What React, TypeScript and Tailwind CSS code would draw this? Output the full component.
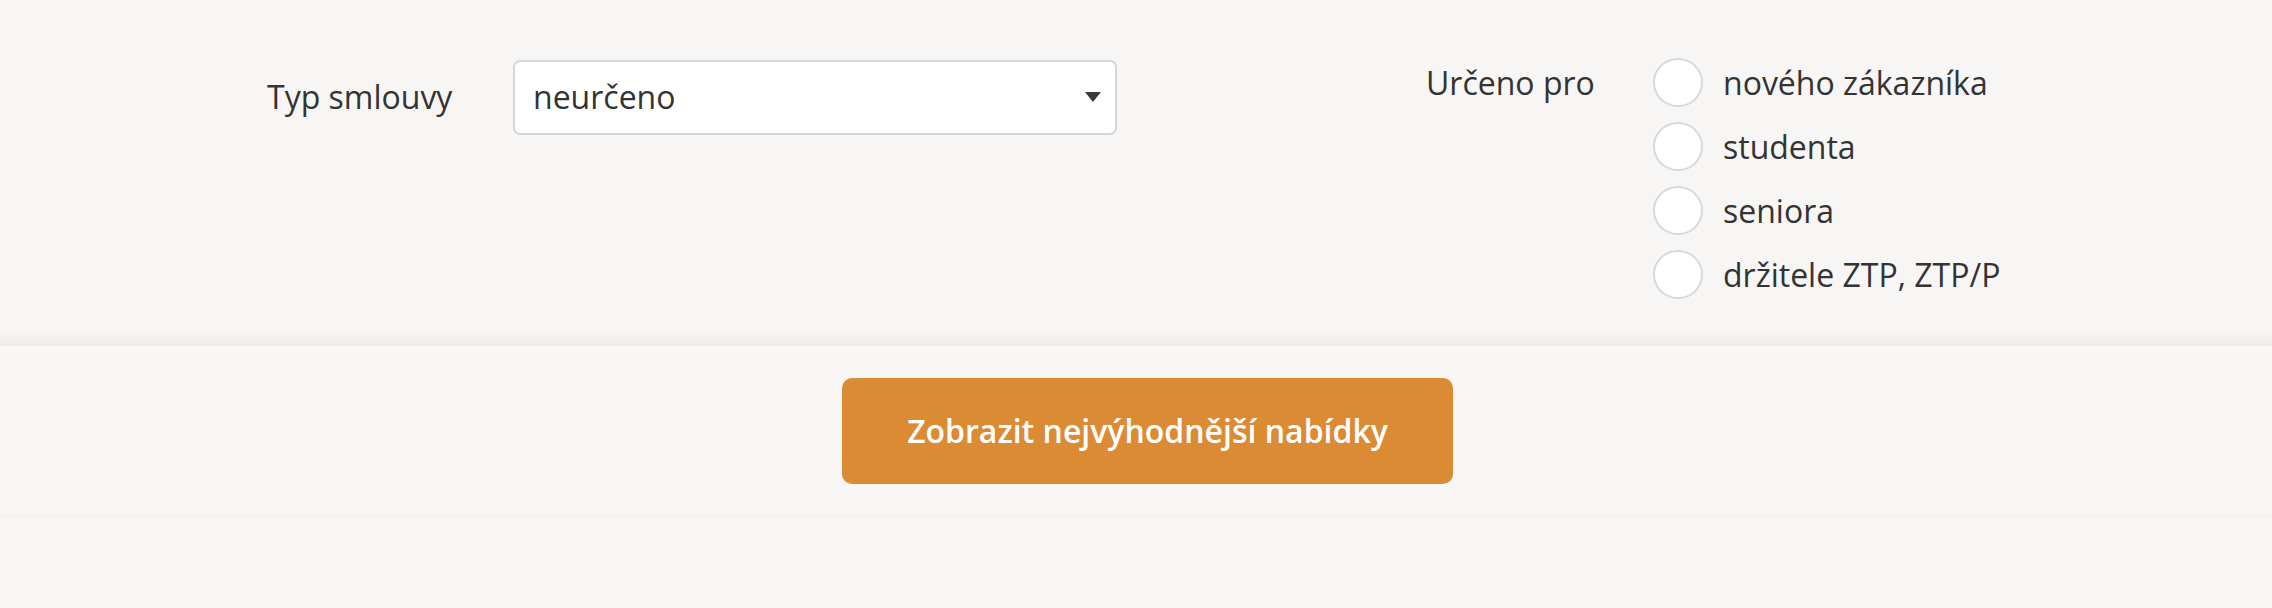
import React from "react";

const font = { fontFamily: '"Open Sans", "Noto Sans", sans-serif' };

function Radio({ label }: { label: string }) {
  return (
    <label className="flex items-center h-[49px] cursor-pointer">
      <span className="w-[50px] h-[49px] rounded-full bg-white border-2 border-[#d9d9d9] shrink-0" />
      <span className="ml-[20px] text-[32px] leading-none text-[#333333]">{label}</span>
    </label>
  );
}

export default function App() {
  return (
    <div className="w-[2272px] h-[608px] bg-[#f7f6f4] text-[#333333]" style={font}>
      <div className="h-[346px] flex flex-col">
        <div className="flex-1 flex pt-[58px]">
          <div className="flex items-start ml-[267px]">
            <div className="flex items-center h-[76px] mt-px">
              <span className="w-[246px] text-[32px] leading-none">Typ smlouvy</span>
              <div className="w-[604px] h-[75px] bg-white border-2 border-[#d6d6d6] rounded-[7px] flex items-center pl-[18px] pr-[14px]">
                <span className="flex-1 text-[32px] leading-none">neurčeno</span>
                <svg width="16" height="10" viewBox="0 0 16 10">
                  <polygon points="0,0 16,0 8,10" fill="#3a3a3a" />
                </svg>
              </div>
            </div>
          </div>
          <div className="flex items-start ml-[309px]">
            <div className="w-[227px] h-[49px] flex items-center text-[32px] leading-none">Určeno pro</div>
            <div className="flex flex-col gap-[15px]">
              <Radio label="nového zákazníka" />
              <Radio label="studenta" />
              <Radio label="seniora" />
              <Radio label="držitele ZTP, ZTP/P" />
            </div>
          </div>
        </div>
        <div className="h-[16px] bg-gradient-to-b from-[#f7f6f4] to-[#eeedeb]" />
      </div>
      <div className="h-[170px] border-b border-[#f1f0ee] border-t-[6px] border-t-[#f9f8f6] flex items-start justify-center pt-[26px] pl-[23px]">
        <button className="w-[611px] h-[106px] rounded-[10px] bg-[#dc8b35] text-white text-[32px] font-semibold leading-none">
          Zobrazit nejvýhodnější nabídky
        </button>
      </div>
    </div>
  );
}
